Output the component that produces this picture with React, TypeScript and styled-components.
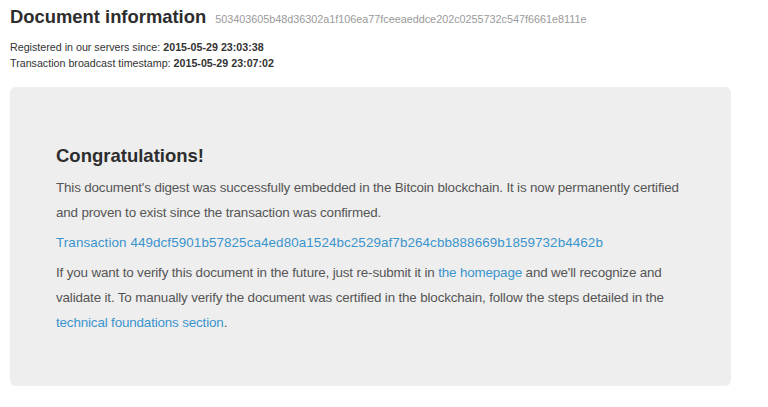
import React from "react";
import styled, { createGlobalStyle } from "styled-components";

const Global = createGlobalStyle`
  html, body { margin: 0; padding: 0; background: #fff; }
  body { font-family: "Liberation Sans", Arial, sans-serif; color: #333; }
`;

const Page = styled.div`
  padding: 5px 37px 0 10px;
`;

const Header = styled.div`
  display: flex;
  align-items: baseline;
  gap: 9px;
`;

const Title = styled.h1`
  margin: 0;
  font-size: 18.4px;
  font-weight: 700;
  color: #2d2d2d;
  line-height: 24px;
`;

const Hash = styled.small`
  font-size: 10.8px;
  color: #9a9a9a;
`;

const Meta = styled.div`
  margin-top: 10px;
  font-size: 10.7px;
  line-height: 16px;
  color: #333;
`;

const Jumbotron = styled.div`
  margin-top: 16px;
  background: #eee;
  border-radius: 6px;
  padding: 57px 30px 46px 46px;
  color: #555;
`;

const Heading = styled.h2`
  margin: 0 0 7px;
  font-size: 18.5px;
  font-weight: 700;
  color: #2d2d2d;
  line-height: 24px;
`;

const Para = styled.p<{ $gapTop?: number }>`
  margin: ${(p) => p.$gapTop ?? 0}px 0 5px;
  font-size: 13.4px;
  letter-spacing: -0.15px;
  line-height: 25px;
`;

const Link = styled.a<{ $wide?: boolean }>`
  color: #3a94cd;
  text-decoration: none;
  letter-spacing: ${(p) => (p.$wide ? "0.1px" : "inherit")};
`;

export default function App() {
  return (
    <>
      <Global />
      <Page>
        <Header>
          <Title>Document information</Title>
          <Hash>503403605b48d36302a1f106ea77fceeaeddce202c0255732c547f6661e8111e</Hash>
        </Header>
        <Meta>
          <div>
            Registered in our servers since: <b>2015-05-29 23:03:38</b>
          </div>
          <div>
            Transaction broadcast timestamp: <b>2015-05-29 23:07:02</b>
          </div>
        </Meta>
        <Jumbotron>
          <Heading>Congratulations!</Heading>
          <Para>
            This document's digest was successfully embedded in the Bitcoin blockchain. It is now
            permanently certified
            <br />
            and proven to exist since the transaction was confirmed.
          </Para>
          <Para $gapTop={2}>
            <Link href="#" $wide>
              Transaction 449dcf5901b57825ca4ed80a1524bc2529af7b264cbb888669b1859732b4462b
            </Link>
          </Para>
          <Para>
            If you want to verify this document in the future, just re-submit it in{" "}
            <Link href="#">the homepage</Link> and we'll recognize and
            <br />
            validate it. To manually verify the document was certified in the blockchain, follow
            the steps detailed in the
            <br />
            <Link href="#">technical foundations section</Link>.
          </Para>
        </Jumbotron>
      </Page>
    </>
  );
}
